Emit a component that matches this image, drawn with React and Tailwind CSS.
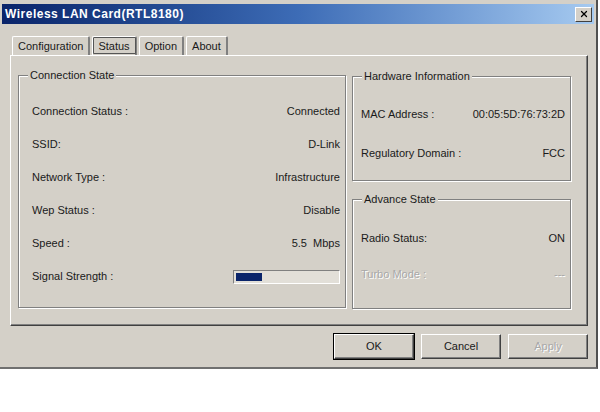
import { X } from 'lucide-react'

const connRows = [
  ['Connection Status :', 'Connected'],
  ['SSID:', 'D-Link'],
  ['Network Type :', 'Infrastructure'],
  ['Wep Status :', 'Disable'],
  ['Speed :', '5.5  Mbps'],
]

function Group({ title, className, children }) {
  return (
    <div
      className={`relative border border-[#808080] shadow-[inset_1px_1px_0_#fff,1px_1px_0_#fff] ${className}`}
    >
      <span className="absolute -top-[8px] left-[9px] bg-[#d4d0c8] px-[2px] leading-[14px]">
        {title}
      </span>
      {children}
    </div>
  )
}

function Tab({ label, active }) {
  return (
    <div
      className={`h-[19px] flex items-center px-[5px] border-l border-t border-white border-r-2 border-r-[#808080] rounded-t-[2px] ${
        active ? 'outline outline-1 outline-[#555] -outline-offset-2' : ''
      }`}
    >
      {label}
    </div>
  )
}

function Button({ label, isDefault, disabled }) {
  return (
    <div
      className={`w-[80px] h-[25px] flex items-center justify-center border border-t-white border-l-white border-r-[#404040] border-b-[#404040] shadow-[inset_-1px_-1px_0_#808080] ${
        isDefault ? 'outline outline-1 outline-black' : ''
      } ${disabled ? 'text-[#a8a8a8] [text-shadow:1px_1px_0_#fff]' : ''}`}
    >
      {label}
    </div>
  )
}

export default function App() {
  return (
    <div className="w-[600px] h-[412px] bg-white font-['Liberation_Sans',Arial,sans-serif] text-[11px] text-[#1a1a1a]">
      <div className="w-[598px] h-[369px] bg-[#d4d0c8] border-r-2 border-b-2 border-r-[#505050] border-b-[#707070] flex flex-col pt-[4px] px-[2px]">
        {/* title bar */}
        <div className="h-[20px] flex items-center justify-between pl-[3px] pr-[2px] bg-gradient-to-r from-[#0a246a] via-[#3d6cb6] to-[#a6caf0]">
          <span className="text-white font-bold text-[12px] tracking-[0.5px]">Wireless LAN Card(RTL8180)</span>
          <div className="w-[17px] h-[15px] bg-[#d4d0c8] border border-t-white border-l-white border-r-[#404040] border-b-[#404040] flex items-center justify-center">
            <X size={10} strokeWidth={3} className="text-black" />
          </div>
        </div>

        {/* tabs */}
        <div className="flex mt-[12px] ml-[10px] gap-[2px]">
          <Tab label="Configuration" />
          <Tab label="Status" active />
          <Tab label="Option" />
          <Tab label="About" />
        </div>

        {/* panel */}
        <div className="ml-[8px] w-[578px] h-[271px] border border-t-white border-l-white border-r-[#404040] border-b-[#404040] shadow-[inset_-1px_-1px_0_#808080] flex gap-[6px] pl-[7px] pt-[19px]">
          <Group title="Connection State" className="w-[328px] h-[233px] pl-[13px] pr-[5px] pt-[19px]">
            {connRows.map(([k, v]) => (
              <div key={k} className="h-[33px] flex items-center justify-between">
                <span>{k}</span>
                <span className="whitespace-pre">{v}</span>
              </div>
            ))}
            <div className="h-[33px] flex items-center justify-between">
              <span>Signal Strength :</span>
              <div className="w-[107px] h-[14px] border border-t-[#808080] border-l-[#808080] border-r-white border-b-white bg-[#e2dfd8] flex items-center px-[2px]">
                <div className="w-[26px] h-[8px] bg-[#0a246a]" />
              </div>
            </div>
          </Group>

          <div className="flex flex-col gap-[18px] pt-[1px]">
            <Group title="Hardware Information" className="w-[219px] h-[105px] pl-[8px] pr-[5px] pt-[21px]">
              <div className="h-[33px] flex items-center justify-between">
                <span>MAC Address :</span>
                <span>00:05:5D:76:73:2D</span>
              </div>
              <div className="h-[45px] flex items-center justify-between">
                <span>Regulatory Domain :</span>
                <span>FCC</span>
              </div>
            </Group>
            <Group title="Advance State" className="w-[219px] h-[110px] pl-[8px] pr-[5px] pt-[22px]">
              <div className="h-[33px] flex items-center justify-between">
                <span>Radio Status:</span>
                <span>ON</span>
              </div>
              <div className="h-[39px] flex items-center justify-between text-[#a8a8a8] [text-shadow:1px_1px_0_#fff]">
                <span>Turbo Mode :</span>
                <span>---</span>
              </div>
            </Group>
          </div>
        </div>

        {/* buttons */}
        <div className="flex justify-end gap-[7px] mt-[8px] mr-[6px]">
          <Button label="OK" isDefault />
          <Button label="Cancel" />
          <Button label="Apply" disabled />
        </div>
      </div>
    </div>
  )
}
